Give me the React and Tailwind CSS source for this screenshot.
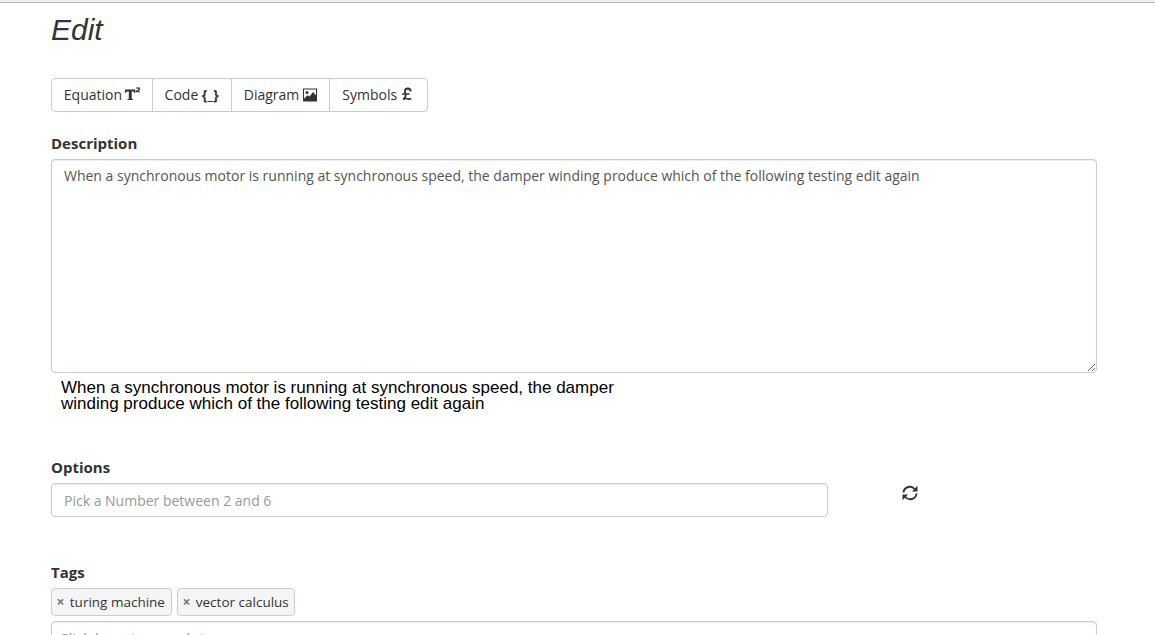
import React from "react";

const os = "font-['Open_Sans',sans-serif]";

function ToolButton({ label, children, className }) {
  return (
    <button className={`flex h-[34px] items-center border border-[#ccc] bg-white text-left leading-5 ${className}`}>
      <span className="mr-[3px] whitespace-nowrap">{label}</span>
      {children}
    </button>
  );
}

function Superscript() {
  return (
    <svg className="h-4 w-4" viewBox="0 0 16 16">
      <path fill="#333" d="M0 2.600h10.300v3.200h-1Q9 4.500 7.900 4.500H6.700v6.800q0 .9 1.400 .9v.8H2.400v-.8q1.400 0 1.400-.9V4.500H2.500Q1.200 4.500 1 5.800H0ZM11 1.500V.4h3.900V3.100l-2.200 1.100H14.900V5.200H10.700V4l2.600-1.600v-.9Z" />
    </svg>
  );
}

function Picture() {
  return (
    <svg className="-ml-[0.5px] h-[14px] w-[16px]" viewBox="0 0 16 14">
      <path fill="#333" fillRule="evenodd" d="M1 .5H15V13.500H1ZM2 1.500v9.300l3.500-3.500 2 1.200 3.600-4.500L14 7.500V1.500ZM5 2.900a1.500 1.500 0 1 1 0 3 1.500 1.500 0 0 1 0-3Z" />
    </svg>
  );
}

function Pound() {
  return (
    <svg className="-mt-[2px] ml-px h-[14px] w-[12px]" viewBox="0 0 12 14">
      <path d="M9.600 4.600Q9.600 1.500 6.900 1.500Q3.900 1.600 3.900 4.300C3.900 5.500 4.700 6.300 4.700 8.300Q4.700 10.800 2.300 12.200" fill="none" stroke="#333" strokeWidth="1.900" />
      <path d="M1 7H8.500M2 12.200Q5 11 6.800 11.900Q8.700 12.600 10.300 11.400" fill="none" stroke="#333" strokeWidth="1.700" />
    </svg>
  );
}

function Refresh() {
  return (
    <svg className="h-4 w-4" viewBox="0 0 16 16">
      <g fill="none" stroke="#333" strokeWidth="1.9">
        <path d="M1.5 7.5A6.300 6.300 0 0 1 12.800 4.300" />
        <path d="M14.500 8.5A6.300 6.300 0 0 1 3.200 11.700" />
      </g>
      <path fill="#333" d="M15.500 .8v5.800H9.900ZM.5 15.200V9.400h5.600Z" />
    </svg>
  );
}

function Tag({ children, className }) {
  return (
    <div className={`flex h-7 items-center whitespace-nowrap rounded-[4px] border border-[#ccc] bg-[#f5f5f7] pl-[4px] text-[13.5px] ${className}`}>
      <span className="mr-[4.8px] w-[9px] text-center text-[14px] font-bold text-[#777]">×</span>
      {children}
    </div>
  );
}

function Label({ children, className }) {
  return <label className={`mb-1.5 block text-[15px] font-bold ${className}`}>{children}</label>;
}

export default function App() {
  return (
    <div className={`h-[635px] overflow-hidden bg-white text-sm leading-5 text-[#333] ${os}`}>
      <div className="h-[3px] border-b border-[#b5b5b5] bg-[#f2f2f2]" />
      <main className="ml-[51px] w-[1046px]">
        <h1 className="pt-[10px] font-['Liberation_Sans',Arial,sans-serif] text-[30px] italic leading-[33px]">Edit</h1>
        <div className="mt-8 flex">
          <ToolButton label="Equation" className="w-[102px] rounded-l pl-[11.8px]"><Superscript /></ToolButton>
          <ToolButton label="Code" className="-ml-px w-[80px] pl-[11.6px]">
            <span className="ml-[0.6px] font-bold">{"{_}"}</span>
          </ToolButton>
          <ToolButton label="Diagram" className="-ml-px w-[99px] pl-[11.8px]"><Picture /></ToolButton>
          <ToolButton label="Symbols" className="-ml-px w-[99px] rounded-r pl-[12.3px]"><Pound /></ToolButton>
        </div>
        <Label className="mt-[21px]">Description</Label>
        <textarea
          className="block h-[214px] w-full rounded border border-[#ccc] px-3 py-1.5 leading-5 text-[#555] shadow-[inset_0_1px_1px_rgba(0,0,0,0.075)]"
          defaultValue="When a synchronous motor is running at synchronous speed, the damper winding produce which of the following testing edit again"
        />
        <p className="ml-[10px] mt-[7px] h-8 w-[580px] font-['Liberation_Sans',Arial,sans-serif] text-[17px] leading-4 text-black">
          When a synchronous motor is running at synchronous speed, the damper winding produce which of the following testing edit again
        </p>
        <Label className="mt-[45px]">Options</Label>
        <div className="flex">
          <input
            placeholder="Pick a Number between 2 and 6"
            className="h-[34px] w-[777px] rounded border border-[#ccc] px-3 py-1.5 text-sm text-[#555] shadow-[inset_0_1px_1px_rgba(0,0,0,0.075)] placeholder:text-[#999]"
          />
          <div className="ml-[74px] mt-[2px]"><Refresh /></div>
        </div>
        <Label className="mt-[45px]">Tags</Label>
        <div className="flex gap-[5px]">
          <Tag className="w-[121px]">turing machine</Tag>
          <Tag className="w-[118px]">vector calculus</Tag>
        </div>
        <input
          placeholder="Click here to search tags"
          className="mt-[5px] block h-[34px] w-full rounded border border-[#ccc] px-[7px] text-[15px] shadow-[inset_0_1px_1px_rgba(0,0,0,0.075)] placeholder:text-[#999]"
        />
      </main>
    </div>
  );
}
